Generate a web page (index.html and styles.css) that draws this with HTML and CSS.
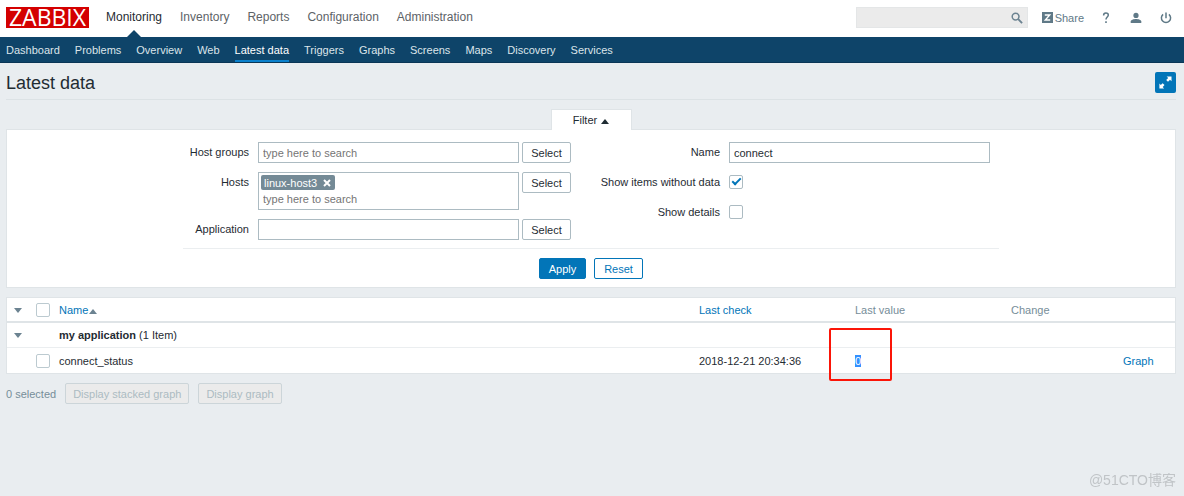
FILE: index.html
```html
<!DOCTYPE html>
<html lang="en">
<head>
<meta charset="utf-8">
<title>Latest data</title>
<link rel="stylesheet" href="styles.css">
</head>
<body>
<header class="top">
  <a class="logo" href="#">ZABBIX</a>
  <nav class="main-nav" aria-label="Main">
    <a class="active" href="#">Monitoring</a>
    <a href="#">Inventory</a>
    <a href="#">Reports</a>
    <a href="#">Configuration</a>
    <a href="#">Administration</a>
  </nav>
  <form class="search">
    <input type="text" aria-label="Search">
    <button type="button" aria-label="Search"><svg width="12" height="12" viewBox="0 0 12 12"><circle cx="4.6" cy="4.6" r="3.4" fill="none" stroke="#6c8391" stroke-width="1.5"/><path d="M7.2 7.2l3.9 3.9" stroke="#6c8391" stroke-width="1.9"/></svg></button>
  </form>
  <a class="share" href="#"><svg width="11" height="11" viewBox="0 0 11 11"><path fill="#5f7987" d="M0 0h11v11H0z"/><path d="M2.8 3h4.9L3.3 8h4.9" fill="none" stroke="#fff" stroke-width="1.4"/></svg>Share</a>
  <a class="tool" href="#" aria-label="Help"><svg width="8" height="12" viewBox="0 0 8 12"><path d="M1.6 3.4C1.6 1.8 2.6 1 3.9 1s2.4.8 2.4 2.1c0 1.9-2.3 2-2.3 4.4" fill="none" stroke="#5f7987" stroke-width="1.5"/><path fill="#5f7987" d="M3.2 9.3h1.6V11H3.2z"/></svg></a>
  <a class="tool" href="#" aria-label="User profile"><svg width="12" height="12" viewBox="0 0 12 12"><circle cx="6" cy="3.4" r="2.6" fill="#5f7987"/><path d="M.7 11V9.6C.7 7.9 3.6 7 6 7s5.3.9 5.3 2.6V11z" fill="#5f7987"/></svg></a>
  <a class="tool" href="#" aria-label="Sign out"><svg width="12" height="12" viewBox="0 0 12 12"><path d="M6 .6v5.6M3.1 2.4a4.6 4.6 0 1 0 5.8 0" fill="none" stroke="#5f7987" stroke-width="1.5"/></svg></a>
</header>
<nav class="sub-nav" aria-label="Monitoring">
  <a href="#">Dashboard</a>
  <a href="#">Problems</a>
  <a href="#">Overview</a>
  <a href="#">Web</a>
  <a class="active" href="#">Latest data</a>
  <a href="#">Triggers</a>
  <a href="#">Graphs</a>
  <a href="#">Screens</a>
  <a href="#">Maps</a>
  <a href="#">Discovery</a>
  <a href="#">Services</a>
</nav>
<main>
  <div class="title">
    <h1>Latest data</h1>
    <button class="expand" type="button" aria-label="Fullscreen"><svg width="21" height="21" viewBox="0 0 21 21"><path d="M11.6 4.4h4.9v4.9l-1.5-1.5-2 2-1.8-1.8 2-2zM4.4 11.6l1.4 1.4 1.8-1.8 1.9 1.9-1.8 1.8 1.4 1.5H4.4z" fill="#fff"/></svg></button>
  </div>
  <section class="filter">
    <button class="tab" type="button">Filter <span class="tri up"></span></button>
    <form class="panel">
      <div class="fields">
        <div class="col">
          <div class="row">
            <label for="groups">Host groups</label>
            <input class="text" id="groups" type="text" placeholder="type here to search">
            <button class="btn" type="button">Select</button>
          </div>
          <div class="row">
            <label for="hosts">Hosts</label>
            <div class="multi">
              <span class="chip">linux-host3<button type="button" aria-label="Remove linux-host3"><svg width="8" height="8" viewBox="0 0 8 8"><path d="M1 1l6 6M7 1L1 7" stroke="#fff" stroke-width="2"/></svg></button></span>
              <input id="hosts" type="text" placeholder="type here to search">
            </div>
            <button class="btn" type="button">Select</button>
          </div>
          <div class="row">
            <label for="app">Application</label>
            <input class="text" id="app" type="text">
            <button class="btn" type="button">Select</button>
          </div>
        </div>
        <div class="col right">
          <div class="row">
            <label for="name">Name</label>
            <input class="text" id="name" type="text" value="connect">
          </div>
          <div class="row">
            <label for="nodata">Show items without data</label>
            <input class="check" id="nodata" type="checkbox" checked>
          </div>
          <div class="row">
            <label for="details">Show details</label>
            <input class="check" id="details" type="checkbox">
          </div>
        </div>
      </div>
      <div class="submit">
        <button class="btn primary" type="button">Apply</button>
        <button class="btn outline" type="button">Reset</button>
      </div>
    </form>
  </section>
  <table class="data">
    <colgroup><col class="c-toggle"><col class="c-check"><col><col class="c-time"><col class="c-value"><col class="c-change"><col class="c-link"></colgroup>
    <thead>
      <tr>
        <th><span class="tri down"></span></th>
        <th><input class="check" type="checkbox" aria-label="Select all"></th>
        <th><a href="#">Name <span class="tri up"></span></a></th>
        <th><a href="#">Last check</a></th>
        <th>Last value</th>
        <th>Change</th>
        <th></th>
      </tr>
    </thead>
    <tbody>
      <tr>
        <td><span class="tri down"></span></td>
        <td></td>
        <td colspan="5"><b>my application</b> (1 Item)</td>
      </tr>
      <tr>
        <td></td>
        <td><input class="check" type="checkbox" aria-label="Select connect_status"></td>
        <td>connect_status</td>
        <td>2018-12-21 20:34:36</td>
        <td class="marked"><span class="selected">0</span></td>
        <td></td>
        <td><a href="#">Graph</a></td>
      </tr>
    </tbody>
  </table>
  <div class="actions">
    <span>0 selected</span>
    <button class="btn" type="button" disabled>Display stacked graph</button>
    <button class="btn" type="button" disabled>Display graph</button>
  </div>
</main>
<div class="watermark">@51CTO博客</div>
</body>
</html>
```
FILE: styles.css
```css
*, *::before, *::after { box-sizing: border-box; }

body {
  margin: 0;
  min-height: 100vh;
  background: #e9edf0;
  color: #1f2c33;
  font: 11px/14px "Liberation Sans", Arial, "Noto Sans CJK SC", sans-serif;
}

a { color: #0275b8; text-decoration: none; }
input, button { font: inherit; color: inherit; margin: 0; }
button { padding: 0; border: 0; background: none; }
svg { display: block; }

.top {
  display: flex;
  align-items: center;
  height: 37px;
  padding: 0 12px 2px 6px;
  background: #fff;
}
.logo {
  width: 83px;
  height: 21px;
  background: #d40000;
  color: #fff;
  font: 23px/20px "Open Sans", sans-serif;
  text-align: center;
}
.main-nav { display: flex; gap: 18px; margin-left: 17px; }
.main-nav a { position: relative; color: #5d6367; font-size: 12px; line-height: 35px; }
.main-nav .active { color: #1f2c33; }
.main-nav .active::after {
  content: "";
  position: absolute;
  left: 50%;
  bottom: -2px;
  margin-left: -7px;
  border: 7px solid transparent;
  border-top: 0;
  border-bottom-color: #0e4469;
}
.search { display: flex; width: 172px; height: 21px; margin-left: auto; background: #ebebeb; border: 1px solid #e4e6e7; }
.search input { flex: 1; min-width: 0; border: 0; background: none; }
.search button { padding: 0 4px; }
.share { display: flex; align-items: center; gap: 2px; margin: 0 16px 0 14px; color: #5f7987; }
.tool { display: flex; justify-content: center; width: 12px; }
.tool + .tool { margin-left: 18px; }

.sub-nav {
  display: flex;
  gap: 15px;
  height: 26px;
  padding: 0 6px;
  background: #0e4469;
  border-bottom: 1px solid #0a3656;
}
.sub-nav a { color: #dce4ea; line-height: 26px; }
.sub-nav .active { color: #fff; border-bottom: 2px solid #0a80cc; }

main { padding: 0 8px 0 6px; }
.title {
  display: flex;
  justify-content: space-between;
  align-items: center;
  height: 37px;
  padding-top: 3px;
  border-bottom: 1px solid #dce2e5;
}
h1 { margin: 0; font-size: 18px; font-weight: 400; line-height: 24px; }
.expand { width: 21px; height: 21px; border-radius: 2px; background: #0275b8; }

.filter { display: flex; flex-direction: column; align-items: center; margin-top: 9px; }
.tab {
  position: relative;
  width: 81px;
  height: 21px;
  margin-bottom: -1px;
  background: #fff;
  border: 1px solid #dfe4e7;
  border-bottom: 0;
}
.panel { width: 100%; padding: 12px 0 8px; background: #fff; border: 1px solid #dfe4e7; }
.fields {
  display: flex;
  justify-content: space-between;
  max-width: 816px;
  margin: 0 auto;
  padding: 0 9px 8px 0;
  border-bottom: 1px solid #ebeef0;
}
.col { display: flex; flex-direction: column; gap: 9px; }
.row { display: flex; align-items: flex-start; }
.row label { width: 66px; margin-right: 9px; line-height: 21px; text-align: right; }
.right .row label { width: 130px; }
.text, .multi { width: 261px; border: 1px solid #acbbc2; background: #fff; }
.text { height: 21px; padding: 0 4px; }
.multi { padding: 2px; }
.multi input { display: block; width: 100%; height: 17px; padding: 0 2px; border: 0; }
::placeholder { color: #757575; opacity: 1; }
.chip {
  display: inline-flex;
  align-items: center;
  gap: 6px;
  height: 15px;
  padding: 0 4px 0 3px;
  border-radius: 2px;
  background: #748a96;
  color: #fff;
  vertical-align: top;
}
.btn {
  height: 21px;
  padding: 0 7px;
  border: 1px solid #acbbc2;
  border-radius: 2px;
  background: #fff;
}
.row .btn { width: 49px; margin-left: 3px; }
.submit { display: flex; justify-content: center; gap: 8px; padding-top: 9px; }
.primary { width: 47px; background: #0275b8; border-color: #0275b8; color: #fff; }
.outline { width: 49px; border-color: #0275b8; color: #0275b8; }

.check {
  appearance: none;
  display: block;
  width: 14px;
  height: 14px;
  border: 1px solid #acbbc2;
  border-radius: 2px;
  background: #fff;
}
.row .check { margin-top: 3px; }
.check:checked::before {
  content: "";
  display: block;
  width: 5px;
  height: 9px;
  margin: 0 4px;
  border: solid #0275b8;
  border-width: 0 2px 2px 0;
  transform: rotate(45deg);
}

.tri { display: inline-block; border: 4px solid transparent; }
.tri.up { border-width: 0 4px 5px; border-bottom-color: currentColor; }
.tri.down { border-width: 5px 4px 0; border-top-color: #6c8391; vertical-align: 1px; }
.tab .tri { margin-left: 1px; }

.data {
  width: 100%;
  margin-top: 9px;
  table-layout: fixed;
  border-collapse: separate;
  border-spacing: 0;
  background: #fff;
  border: 1px solid #dfe4e7;
}
.c-toggle { width: 25px; }
.c-check { width: 23px; }
.c-time, .c-value { width: 156px; }
.c-change { width: 112px; }
.c-link { width: 56px; }
.data th, .data td { height: 25px; padding: 0 4px; text-align: left; white-space: nowrap; }
.data th { border-bottom: 2px solid #dfe4e7; color: #768d99; font-weight: 400; }
.data td { border-bottom: 1px solid #ebeef0; }
.data tr:last-child td { border-bottom: 0; }
.data th:first-child, .data td:first-child { padding-left: 7px; }
.data th .up { margin-left: -2px; color: #6c8391; }
.data .check { border-color: #bccad0; }
.marked { position: relative; }
.marked::after {
  content: "";
  position: absolute;
  left: -22px;
  top: -20px;
  width: 63px;
  height: 53px;
  border: 2px solid #fb1508;
  border-radius: 2px;
}
.selected { background: #3390ff; color: #fff; }

.actions { display: flex; align-items: center; gap: 9px; margin-top: 9px; color: #768d99; }
.actions .btn { background: #ebebeb; border-color: #ccd5d9; color: #acbbc2; }

.watermark { position: fixed; right: 8px; bottom: 6px; color: #c0c4c7; font-size: 14px; line-height: 20px; }
```
